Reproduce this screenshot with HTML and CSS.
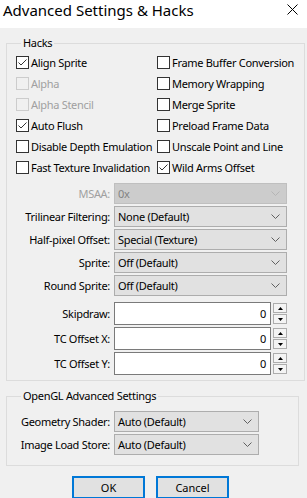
FILE: index.html
```html
<!DOCTYPE html>
<html lang="en">
<head>
  <meta charset="UTF-8" />
  <title>Advanced Settings &amp; Hacks</title>
  <link rel="stylesheet" href="styles.css">
</head>
<body>
  <div class="titlebar">
    <span class="title">Advanced Settings &amp; Hacks</span>
    <svg class="close" width="11" height="11" viewBox="0 0 11 11"><path d="M0.5 0.5 L10.5 10.5 M10.5 0.5 L0.5 10.5" stroke="#000" stroke-width="1" fill="none"/></svg>
  </div>

  <div class="dialog">
    <fieldset class="group hacks">
      <legend>Hacks</legend>
      <div class="checks">
        <label class="check"><span class="box"><svg viewBox="0 0 11 11"><path d="M1.5 5.5 L4 8 L9.5 2.5" stroke="#333" stroke-width="1" fill="none"/></svg></span>Align Sprite</label>
        <label class="check"><span class="box"></span>Frame Buffer Conversion</label>
        <label class="check disabled"><span class="box"></span>Alpha</label>
        <label class="check"><span class="box"></span>Memory Wrapping</label>
        <label class="check disabled"><span class="box"></span>Alpha Stencil</label>
        <label class="check"><span class="box"></span>Merge Sprite</label>
        <label class="check"><span class="box"><svg viewBox="0 0 11 11"><path d="M1.5 5.5 L4 8 L9.5 2.5" stroke="#333" stroke-width="1" fill="none"/></svg></span>Auto Flush</label>
        <label class="check"><span class="box"></span>Preload Frame Data</label>
        <label class="check"><span class="box"></span>Disable Depth Emulation</label>
        <label class="check"><span class="box"></span>Unscale Point and Line</label>
        <label class="check"><span class="box"></span>Fast Texture Invalidation</label>
        <label class="check"><span class="box"><svg viewBox="0 0 11 11"><path d="M1.5 5.5 L4 8 L9.5 2.5" stroke="#333" stroke-width="1" fill="none"/></svg></span>Wild Arms Offset</label>
      </div>

      <div class="form">
        <span class="lbl disabled">MSAA:</span>
        <div class="combo disabled"><span>0x</span><svg width="9" height="5" viewBox="0 0 9 5"><path d="M0.5 0.5 L4.5 4.5 L8.5 0.5" stroke="#b5b5b5" fill="none"/></svg></div>

        <span class="lbl">Trilinear Filtering:</span>
        <div class="combo"><span>None (Default)</span><svg width="9" height="5" viewBox="0 0 9 5"><path d="M0.5 0.5 L4.5 4.5 L8.5 0.5" stroke="#606060" fill="none"/></svg></div>

        <span class="lbl">Half-pixel Offset:</span>
        <div class="combo"><span>Special (Texture)</span><svg width="9" height="5" viewBox="0 0 9 5"><path d="M0.5 0.5 L4.5 4.5 L8.5 0.5" stroke="#606060" fill="none"/></svg></div>

        <span class="lbl">Sprite:</span>
        <div class="combo"><span>Off (Default)</span><svg width="9" height="5" viewBox="0 0 9 5"><path d="M0.5 0.5 L4.5 4.5 L8.5 0.5" stroke="#606060" fill="none"/></svg></div>

        <span class="lbl">Round Sprite:</span>
        <div class="combo"><span>Off (Default)</span><svg width="9" height="5" viewBox="0 0 9 5"><path d="M0.5 0.5 L4.5 4.5 L8.5 0.5" stroke="#606060" fill="none"/></svg></div>
      </div>

      <div class="form spins">
        <span class="lbl">Skipdraw:</span>
        <div class="spin">
          <div class="field">0</div>
          <div class="arrows">
            <span class="arrow"><svg width="5" height="3" viewBox="0 0 5 3"><path d="M2.5 0 L5 3 L0 3 Z" fill="#000"/></svg></span>
            <span class="arrow"><svg width="5" height="3" viewBox="0 0 5 3"><path d="M0 0 L5 0 L2.5 3 Z" fill="#000"/></svg></span>
          </div>
        </div>

        <span class="lbl">TC Offset X:</span>
        <div class="spin">
          <div class="field">0</div>
          <div class="arrows">
            <span class="arrow"><svg width="5" height="3" viewBox="0 0 5 3"><path d="M2.5 0 L5 3 L0 3 Z" fill="#000"/></svg></span>
            <span class="arrow"><svg width="5" height="3" viewBox="0 0 5 3"><path d="M0 0 L5 0 L2.5 3 Z" fill="#000"/></svg></span>
          </div>
        </div>

        <span class="lbl">TC Offset Y:</span>
        <div class="spin">
          <div class="field">0</div>
          <div class="arrows">
            <span class="arrow"><svg width="5" height="3" viewBox="0 0 5 3"><path d="M2.5 0 L5 3 L0 3 Z" fill="#000"/></svg></span>
            <span class="arrow"><svg width="5" height="3" viewBox="0 0 5 3"><path d="M0 0 L5 0 L2.5 3 Z" fill="#000"/></svg></span>
          </div>
        </div>
      </div>
    </fieldset>

    <fieldset class="group gl">
      <legend>OpenGL Advanced Settings</legend>
      <div class="form short">
        <span class="lbl">Geometry Shader:</span>
        <div class="combo"><span>Auto (Default)</span><svg width="9" height="5" viewBox="0 0 9 5"><path d="M0.5 0.5 L4.5 4.5 L8.5 0.5" stroke="#606060" fill="none"/></svg></div>

        <span class="lbl">Image Load Store:</span>
        <div class="combo"><span>Auto (Default)</span><svg width="9" height="5" viewBox="0 0 9 5"><path d="M0.5 0.5 L4.5 4.5 L8.5 0.5" stroke="#606060" fill="none"/></svg></div>
      </div>
    </fieldset>

    <div class="buttons">
      <button class="btn">OK</button>
      <button class="btn">Cancel</button>
    </div>
  </div>
</body>
</html>
```

FILE: styles.css
```css
* { margin: 0; padding: 0; box-sizing: border-box; }

body {
  background: #f0f0f0;
  font-family: "Noto Sans", "Open Sans", sans-serif;
  font-size: 11px;
  letter-spacing: -0.3px;
  color: #000;
  overflow: hidden;
}

.titlebar {
  height: 28px;
  background: #fff;
  display: flex;
  align-items: center;
  justify-content: space-between;
  padding: 0 9px 9px 3px;
}

.title {
  font-size: 15px;
  letter-spacing: 0;
}

.dialog {
  padding: 8px 8px 0 6px;
}

.group {
  border: 1px solid #dcdcdc;
  padding: 2px 10px 5px 9px;
}

.group legend {
  margin-left: 5px;
  padding: 0 2px;
  line-height: 14px;
}

/* Casillas */
.checks {
  display: grid;
  grid-template-columns: 141px 1fr;
  grid-auto-rows: 21px;
}

.check {
  display: flex;
  align-items: center;
  white-space: nowrap;
}

.box {
  width: 13px;
  height: 13px;
  border: 1px solid #333;
  background: #fff;
  margin-right: 2px;
  flex: none;
  display: flex;
}

.box svg {
  width: 11px;
  height: 11px;
}

.check.disabled {
  color: #a0a0a0;
}

.check.disabled .box {
  border-color: #cccccc;
  background: #f0f0f0;
}

/* Filas de formulario */
.form {
  display: grid;
  grid-template-columns: 94px 173px;
  column-gap: 4px;
  row-gap: 2px;
  align-items: center;
  margin-top: 5px;
}

.form.spins {
  margin-top: 6px;
}

.lbl {
  text-align: right;
  white-space: nowrap;
}

.lbl.disabled {
  color: #a0a0a0;
}

.combo {
  height: 21px;
  border: 1px solid #adadad;
  background: #e1e1e1;
  display: flex;
  align-items: center;
  justify-content: space-between;
  padding: 0 6px 0 3px;
}

.combo.disabled {
  background: #cccccc;
  border-color: #bfbfbf;
  color: #838383;
}

.spin {
  display: flex;
  height: 23px;
  gap: 2px;
}

.field {
  flex: 1;
  background: #fff;
  border: 1px solid #7a7a7a;
  text-align: right;
  padding: 3px 4px 0 0;
}

.arrows {
  display: flex;
  flex-direction: column;
  justify-content: center;
  gap: 1px;
  width: 14px;
}

.arrow {
  height: 10px;
  border: 1px solid #adadad;
  background: #f4f4f4;
  display: flex;
  align-items: center;
  justify-content: center;
}

.gl {
  margin-top: 8px;
  padding-top: 8px;
  padding-bottom: 10px;
}

.form.short {
  grid-template-columns: 94px 145px;
  margin-top: 0;
}

.buttons {
  display: flex;
  justify-content: center;
  gap: 11px;
  padding: 10px 4px 0 0;
}

.btn {
  width: 73px;
  height: 23px;
  font: inherit;
  background: #e1e1e1;
  border: 2px solid #0078d7;
}
```
